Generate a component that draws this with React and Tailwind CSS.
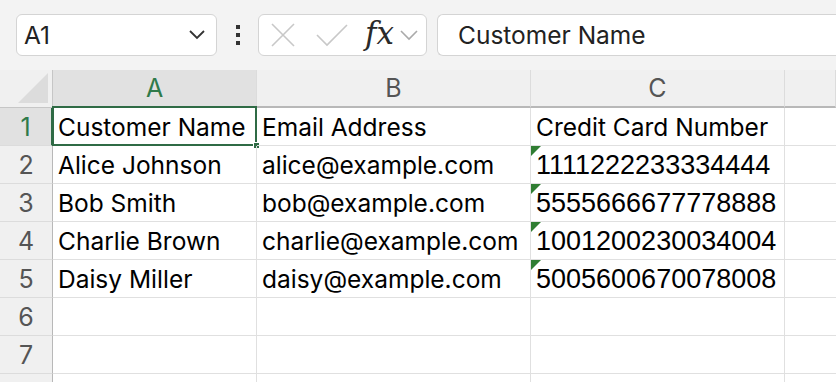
import React from 'react';

const rows = [
  ['Customer Name', 'Email Address', 'Credit Card Number'],
  ['Alice Johnson', 'alice@example.com', '1111222233334444'],
  ['Bob Smith', 'bob@example.com', '5555666677778888'],
  ['Charlie Brown', 'charlie@example.com', '1001200230034004'],
  ['Daisy Miller', 'daisy@example.com', '5005600670078008'],
  ['', '', ''],
  ['', '', ''],
  ['', '', ''],
];

const cellFont = { fontFamily: 'Inter, "Noto Sans", sans-serif' };

const App = () => {
  return (
    <div className="w-[836px] h-[382px] overflow-hidden bg-white" style={cellFont}>
      {/* formula bar */}
      <div className="h-[70px] bg-[#f3f3f3] flex items-center pl-4">
        <div className="w-[201px] h-[42px] bg-white border border-[#d4d4d4] rounded-md flex items-center justify-between pl-[7px] pr-[10px]">
          <span className="text-[24.5px] text-[#222]">A1</span>
          <svg width="18" height="12" viewBox="0 0 18 12"><path d="M2 2 L9 9 L16 2" fill="none" stroke="#333" strokeWidth="1.8" /></svg>
        </div>
        <div className="w-[41px] flex flex-col items-center gap-[4px]">
          <span className="w-[4px] h-[4px] bg-[#333]" />
          <span className="w-[4px] h-[4px] bg-[#333]" />
          <span className="w-[4px] h-[4px] bg-[#333]" />
        </div>
        <div className="w-[169px] h-[42px] bg-white border border-[#d4d4d4] rounded-md flex items-center pl-[11px]">
          <svg width="26" height="26" viewBox="0 0 26 26"><path d="M2 2 L24 24 M24 2 L2 24" stroke="#c8c8c8" strokeWidth="1.6" /></svg>
          <svg className="ml-[20px]" width="32" height="24" viewBox="0 0 32 24"><path d="M1 12 L11 22 L31 2" fill="none" stroke="#c8c8c8" strokeWidth="1.6" /></svg>
          <span className="ml-[17px] text-[31px] italic text-[#2a2a2a] leading-none pb-[4px]" style={{ fontFamily: '"DejaVu Serif", "Liberation Serif", serif' }}>fx</span>
          <svg className="ml-[5px]" width="20" height="12" viewBox="0 0 20 12"><path d="M2 2 L10 10 L18 2" fill="none" stroke="#aaa" strokeWidth="1.6" /></svg>
        </div>
        <div className="ml-[10px] flex-1 h-[42px] bg-white border border-[#d4d4d4] border-r-0 rounded-l-md flex items-center pl-[20px]">
          <span className="text-[24.5px] text-[#222]">Customer Name</span>
        </div>
      </div>

      {/* grid */}
      <div className="grid grid-cols-[53px_204px_274px_254px_51px]">
        <div className="h-[38px] bg-[#f0f0f0] border-b border-r border-[#c6c6c6] relative">
          <svg className="absolute right-[4px] bottom-[4px]" width="30" height="30" viewBox="0 0 30 30"><path d="M30 0 L30 30 L0 30 Z" fill="#dcdcdc" /></svg>
        </div>
        {['A', 'B', 'C', ''].map((c, i) => (
          <div
            key={c + i}
            className={`h-[38px] pt-[2px] border-b-2 border-r border-r-[#dcdcdc] flex items-center justify-center text-[25px] ${i === 0 ? 'bg-[#e1e1e1] text-[#2f7a4a] border-b-[#2f6b45]' : 'bg-[#f0f0f0] text-[#555] border-b-[#b8b8b8]'}`}
          >
            {c}
          </div>
        ))}
        {rows.map((r, ri) => (
          <React.Fragment key={ri}>
            <div
              className={`h-[38px] pt-[2px] border-b border-[#dcdcdc] flex items-center justify-center text-[25px] ${ri === 0 ? 'bg-[#e1e1e1] text-[#2f7a4a] border-r-2 border-r-[#2f6b45]' : 'bg-[#f0f0f0] text-[#555] border-r border-r-[#b8b8b8]'}`}
            >
              {ri < 7 ? ri + 1 : ''}
            </div>
            {r.map((v, ci) => {
              const num = ci === 2 && ri > 0 && v;
              const sel = ri === 0 && ci === 0;
              return (
                <div
                  key={ci}
                  className="h-[38px] pt-[2px] border-b border-r border-[#e0e0e0] flex items-center pl-[5px] relative text-[24.5px] text-black whitespace-nowrap"
                >
                  {num && (
                    <svg className="absolute left-0 top-0" width="10" height="10" viewBox="0 0 10 10"><path d="M0 0 L10 0 L0 10 Z" fill="#2f7d32" /></svg>
                  )}
                  {sel && (
                    <>
                      <div className="absolute left-[-1px] top-[-2px] right-[-1px] bottom-[-1px] border-2 border-[#2f6b45]" />
                      <div className="absolute right-[-4px] bottom-[-4px] w-[7px] h-[7px] bg-[#2f6b45] border border-white" />
                    </>
                  )}
                  <span style={num ? { fontFamily: '"Liberation Sans", Arial, sans-serif', fontSize: '27px' } : undefined}>{v}</span>
                </div>
              );
            })}
            <div className="h-[38px] border-b border-[#e0e0e0]" />
          </React.Fragment>
        ))}
      </div>
    </div>
  );
};

export default App;
